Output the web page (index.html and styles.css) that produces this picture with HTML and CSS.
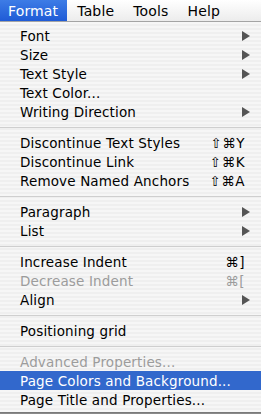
FILE: index.html
```html
<!DOCTYPE html>
<html>
<head>
<meta charset="utf-8">
<link rel="stylesheet" href="styles.css">
</head>
<body>
<div class="menubar">
  <span class="mb-item active">Format</span>
  <span class="mb-item">Table</span>
  <span class="mb-item">Tools</span>
  <span class="mb-item">Help</span>
</div>
<div class="menu">
  <div class="row"><span class="label">Font</span><span class="arrow"></span></div>
  <div class="row"><span class="label">Size</span><span class="arrow"></span></div>
  <div class="row"><span class="label">Text Style</span><span class="arrow"></span></div>
  <div class="row"><span class="label">Text Color...</span></div>
  <div class="row"><span class="label">Writing Direction</span><span class="arrow"></span></div>
  <div class="sep"></div>
  <div class="row"><span class="label">Discontinue Text Styles</span><span class="key">⇧⌘Y</span></div>
  <div class="row"><span class="label">Discontinue Link</span><span class="key">⇧⌘K</span></div>
  <div class="row"><span class="label">Remove Named Anchors</span><span class="key">⇧⌘A</span></div>
  <div class="sep"></div>
  <div class="row"><span class="label">Paragraph</span><span class="arrow"></span></div>
  <div class="row"><span class="label">List</span><span class="arrow"></span></div>
  <div class="sep"></div>
  <div class="row"><span class="label">Increase Indent</span><span class="key">⌘]</span></div>
  <div class="row disabled"><span class="label">Decrease Indent</span><span class="key">⌘[</span></div>
  <div class="row"><span class="label">Align</span><span class="arrow"></span></div>
  <div class="sep"></div>
  <div class="row"><span class="label">Positioning grid</span></div>
  <div class="sep"></div>
  <div class="row disabled"><span class="label">Advanced Properties...</span></div>
  <div class="row selected"><span class="label">Page Colors and Background...</span></div>
  <div class="row"><span class="label">Page Title and Properties...</span></div>
</div>
</body>
</html>
```

FILE: styles.css
```css
html, body {
  margin: 0;
  padding: 0;
  background: #8a8a8a;
}
body {
  font-family: "DejaVu Sans", "Liberation Sans", sans-serif;
  font-size: 13.5px;
  letter-spacing: 0.15px;
  color: #000;
  width: 261px;
  height: 414px;
  overflow: hidden;
}
.menubar {
  height: 21px;
  display: flex;
  align-items: stretch;
  background: linear-gradient(#ffffff, #ececec);
  border-bottom: 1px solid #a4a4a4;
  font-size: 14px;
}
.mb-item {
  display: flex;
  align-items: center;
  padding: 0 9px 0 8px;
  margin-right: 2px;
}
.mb-item.active {
  background: linear-gradient(#3d7ce6, #1f5bd6);
  color: #fff;
}
.menu {
  background: repeating-linear-gradient(#f6f6f6 0 2px, #efefef 2px 4px);
  padding: 4px 0 3px;
  border-bottom: 1px solid #7a7a7a;
}
.row {
  height: 19px;
  display: flex;
  align-items: center;
  justify-content: space-between;
  padding: 0 11px 0 20px;
}
.row.disabled {
  color: #9c9c9c;
}
.row.selected {
  background: #3268cc;
  color: #fff;
}
.arrow {
  width: 0;
  height: 0;
  border-top: 5px solid transparent;
  border-bottom: 5px solid transparent;
  border-left: 8px solid #555;
}
.key {
  margin-right: 5px;
  letter-spacing: 0.5px;
}
.sep {
  height: 12px;
  display: flex;
  align-items: center;
}
.sep::before {
  content: "";
  flex: 1;
  height: 1px;
  background: #cfcfcf;
}
```
